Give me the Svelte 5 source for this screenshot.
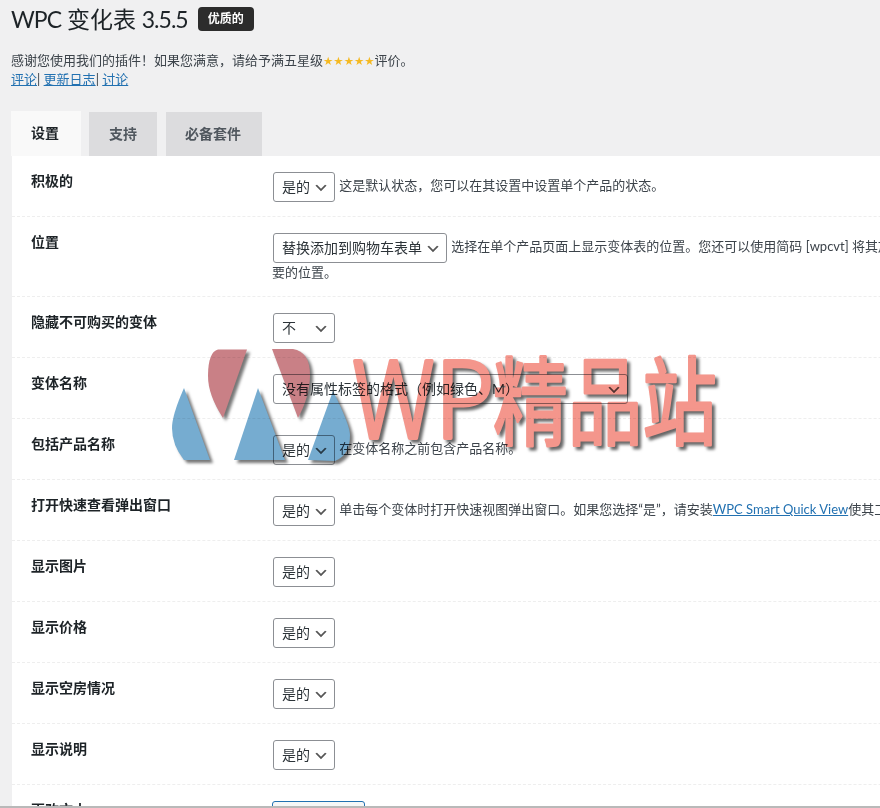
<script>
  const rows = [
    { label: '积极的', desc: '这是默认状态，您可以在其设置中设置单个产品的状态。' },
    { label: '位置', select: ['替换添加到购物车表单', '不'], desc: '选择在单个产品页面上显示变体表的位置。您还可以使用简码 [wpcvt] 将其放置在您想', more: '要的位置。' },
    { label: '隐藏不可购买的变体', select: ['不', '是的'] },
    { label: '变体名称', select: ['没有属性标签的格式（例如绿色、M）'], wide: true },
    { label: '包括产品名称', desc: '在变体名称之前包含产品名称。' },
    { label: '打开快速查看弹出窗口', desc: '单击每个变体时打开快速视图弹出窗口。如果您选择“是”，请安装', link: 'WPC Smart Quick View', after: '使其工作。' },
    { label: '显示图片' },
    { label: '显示价格' },
    { label: '显示空房情况' },
    { label: '显示说明' }
  ];
</script>

<div class="page">
  <header class="head">
    <div class="title">
      <h1><span class="tight">WPC</span> 变化表 <span class="tight">3.5.5</span></h1>
      <span class="badge">优质的</span>
    </div>
    <p class="thanks">感谢您使用我们的插件！如果您满意，请给予满五星级<span class="stars">★★★★★</span>评价。</p>
    <p class="links"><a href="#a">评论</a>| <a href="#b">更新日志</a>| <a href="#c">讨论</a></p>
  </header>

  <nav class="tabs">
    <a class="tab active" href="#s">设置</a>
    <a class="tab" href="#t">支持</a>
    <a class="tab" href="#u">必备套件</a>
  </nav>

  <section class="panel">
    {#each rows as row}
      <div class="row">
        <div class="label">{row.label}</div>
        <div class="field">
          <select class:wide={row.wide}>
            {#each row.select ?? ['是的', '不'] as opt}
              <option>{opt}</option>
            {/each}
          </select>
          {#if row.desc}<span class="desc">{row.desc}{#if row.link}<a href="#w">{row.link}</a>{row.after}{/if}</span>{/if}
          {#if row.more}<div class="more">{row.more}</div>{/if}
        </div>
      </div>
    {/each}
    <div class="row">
      <div class="label">更改文本</div>
      <div class="field last"><button type="button">添加</button></div>
    </div>
  </section>

  <svg class="mark" viewBox="0 0 880 808" width="880" height="808" aria-hidden="true">
    <g class="logo">
      <path fill="#c98086" d="M218 349.5L247 349.5L223 418Q208 395 208 376Q208 352 218 349.5Z" />
      <path fill="#c98086" d="M272 349L293 349Q310 352 310 375C310 390 305 405 298 418Z" />
      <path fill="#76acd0" d="M184 388L210 460L184 460Q172 445 172 428Q172 415 184 388Z" />
      <path fill="#76acd0" d="M258 388L285 460L234 460Z" />
      <path fill="#76acd0" d="M333 391Q350 425 350 435Q350 455 335 461L308 460Z" />
    </g>
    <text class="wm wp" x="352" y="438" textLength="142" lengthAdjust="spacingAndGlyphs">WP</text>
    <text class="wm cjk" x="493" y="437" textLength="224" lengthAdjust="spacingAndGlyphs">精品站</text>
  </svg>
</div>

<style>
  :global(body) {
    margin: 0;
    overflow: hidden;
    background: #f0f0f1;
  }
  .page {
    position: relative;
    width: 880px;
    height: 808px;
    box-sizing: border-box;
    overflow: hidden;
    border-bottom: 2px solid #b9b9b9;
    font-family: "Lato", "Noto Sans CJK SC", sans-serif;
    font-size: 13px;
    color: #3c434a;
  }
  .head {
    padding: 7px 0 0 11px;
  }
  .title {
    display: flex;
    align-items: center;
    gap: 10px;
    height: 24px;
  }
  h1 {
    margin: 0;
    font-size: 23px;
    font-weight: 400;
    line-height: 24px;
    color: #1d2327;
  }
  .tight {
    letter-spacing: -1px;
  }
  .badge {
    width: 56px;
    height: 24px;
    line-height: 24px;
    text-align: center;
    background: #2c2c2c;
    border-radius: 4px;
    color: #fff;
    font-size: 12px;
    font-weight: 700;
  }
  .thanks {
    margin: 19px 0 0;
    line-height: 20px;
  }
  .stars {
    color: #f5b921;
    font-family: "DejaVu Sans", sans-serif;
    font-size: 11.5px;
  }
  .links {
    margin: -2px 0 0;
    line-height: 20px;
  }
  a {
    color: #2271b1;
  }
  .tabs {
    display: flex;
    align-items: flex-end;
    gap: 8px;
    margin: 22px 0 0 11px;
  }
  .tab {
    display: block;
    padding: 0 20px;
    height: 44px;
    line-height: 44px;
    background: #dcdcde;
    color: #50575e;
    font-size: 14px;
    font-weight: 600;
    text-decoration: none;
  }
  .tab.active {
    height: 45px;
    padding: 0 22px 0 20px;
    background: #f9f9f9;
    color: #1d2327;
  }
  .tab:last-child {
    margin-left: 1px;
    padding: 0 21px 0 19px;
  }
  .panel {
    margin-left: 12px;
    width: 1100px;
    background: #fff;
  }
  .row {
    display: flex;
    box-sizing: border-box;
    padding: 16px 0 14px 19px;
    border-bottom: 1px dashed #eee;
  }
  .label {
    flex: 0 0 242px;
    font-size: 14px;
    font-weight: 700;
    line-height: 18px;
    color: #1d2327;
  }
  .field {
    flex: 1;
    white-space: nowrap;
    line-height: 20px;
  }
  select {
    appearance: none;
    box-sizing: border-box;
    height: 30px;
    padding: 0 24px 0 8px;
    vertical-align: middle;
    border: 1px solid #8c8f94;
    border-radius: 3px;
    background: #fff url("data:image/svg+xml,%3Csvg xmlns='http://www.w3.org/2000/svg' width='20' height='20'%3E%3Cpath d='M5 6l5 5 5-5 2 1-7 7-7-7 2-1z' fill='%23555'/%3E%3C/svg%3E") no-repeat right 5px top 55%;
    background-size: 16px 16px;
    font: inherit;
    font-size: 14px;
    color: #2c3338;
  }
  select.wide {
    width: 355px;
  }
  .desc {
    margin-left: 1px;
    text-spacing-trim: space-all;
  }
  .more {
    margin: 0 0 0 -1px;
    line-height: 19px;
  }
  .last button {
    display: block;
    box-sizing: border-box;
    width: 93px;
    height: 32px;
    margin: 0 0 0 -1px;
    border: 1px solid #2271b1;
    border-radius: 3px;
    background: #f6f7f7;
    color: #2271b1;
    font: inherit;
  }
  .mark {
    position: absolute;
    left: 0;
    top: 0;
    mix-blend-mode: multiply;
    pointer-events: none;
  }
  .logo {
    filter: drop-shadow(3px 3px 1.5px #777);
  }
  .wm {
    font-family: "Noto Sans CJK SC", sans-serif;
    fill: #f4968c;
    stroke: #f4968c;
    stroke-linejoin: round;
    stroke-linecap: round;
    filter: drop-shadow(3px 3px 1.5px #666);
  }
  .wp {
    font-size: 106px;
    font-weight: 300;
    stroke-width: 4px;
  }
  .cjk {
    font-size: 96px;
    font-weight: 400;
    stroke-width: 3px;
  }
</style>
